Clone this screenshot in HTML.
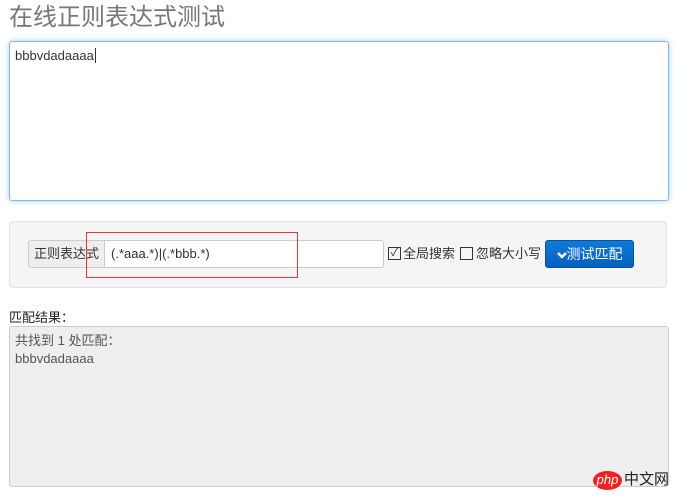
<!DOCTYPE html><html><head><meta charset="utf-8"><style>
body{margin:0;width:685px;height:500px;background:#fff;font-family:"Liberation Sans","Noto Sans CJK SC",sans-serif;font-size:13px;color:#333;position:relative;overflow:hidden}
.a{position:absolute;box-sizing:border-box}
</style></head><body>
<div class="a" style="left:9px;top:3px;font-size:24px;color:#777;line-height:30px">在线正则表达式测试</div>
<div class="a" style="left:9px;top:41px;width:660px;height:160px;border:1px solid #8fb8e0;border-radius:3px;box-shadow:0 0 6px rgba(102,175,233,.6);padding:6px 5px;font-size:13px">bbbvdadaaaa<span style="border-left:1px solid #333;margin-left:1px"></span></div>
<div class="a" style="left:9px;top:221px;width:658px;height:67px;background:#f5f5f5;border:1px solid #e3e3e3;border-radius:4px"></div>
<div class="a" style="left:28px;top:240px;width:77px;height:28px;background:#eee;border:1px solid #ccc;border-radius:3px 0 0 3px;line-height:26px;text-align:center">正则表达式</div>
<div class="a" style="left:104px;top:240px;width:280px;height:28px;background:#fff;border:1px solid #ccc;border-radius:0 3px 3px 0;line-height:26px;padding-left:6px">(.*aaa.*)|(.*bbb.*)</div>
<div class="a" style="left:86px;top:232px;width:212px;height:46px;border:1px solid #e33"></div>
<div class="a" style="left:388px;top:247px;width:13px;height:13px;border:1px solid #333;font-size:11px;line-height:11px;text-align:center">✓</div>
<div class="a" style="left:403px;top:246px;line-height:16px">全局搜索</div>
<div class="a" style="left:460px;top:247px;width:13px;height:13px;border:1px solid #333"></div>
<div class="a" style="left:476px;top:246px;line-height:16px">忽略大小写</div>
<div class="a" style="left:545px;top:240px;width:89px;height:28px;background:linear-gradient(#0f7bd8,#0560c0);border:1px solid #0552a8;border-radius:3px;color:#fff;line-height:26px;text-align:center;font-size:14px"><svg width="10" height="8" viewBox="0 0 10 8" style="vertical-align:0"><path d="M1 2L5 6L9 2" stroke="#fff" stroke-width="2.5" fill="none"/></svg>测试匹配</div>
<div class="a" style="left:9px;top:309px;line-height:18px;color:#222">匹配结果：</div>
<div class="a" style="left:9px;top:326px;width:660px;height:161px;background:#eee;border:1px solid #ccc;border-radius:3px;padding:5px 5px;line-height:18px;color:#555">共找到 1 处匹配：<br>bbbvdadaaaa</div>
<div class="a" style="left:593px;top:471px;width:29px;height:19px;background:#e22;border-radius:50%;color:#fff;font-style:italic;font-size:13px;line-height:18px;text-align:center">php</div>
<div class="a" style="left:624px;top:470px;font-size:15px;color:#222;line-height:20px">中文网</div>
</body></html>
